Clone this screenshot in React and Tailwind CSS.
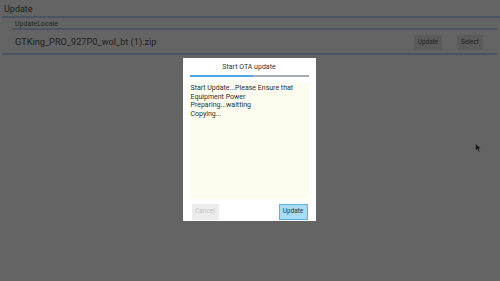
export default function App() {
  return (
    <div className="relative w-[500px] h-[281px] overflow-hidden bg-[#646464] font-['Roboto',sans-serif] text-[#1f1f1f]">
      {/* header */}
      <div className="h-[16px] pl-[4px] pt-[3px] text-[9px] leading-[12px]">Update</div>
      <div className="ml-[2px] h-[2px] bg-[#4c5362]" />
      <div className="h-[10px] pl-[15px] pt-[2px] text-[7px] leading-[8px] text-[#262626]">UpdateLocale</div>
      <div className="ml-[12px] mr-[3px] h-[2px] bg-[#4c5362]" />

      {/* file row */}
      <div className="flex h-[23px] items-center pl-[15px] pr-[17px]">
        <span className="flex-1 text-[9.2px] leading-[12px]">GTKing_PRO_927P0_wol_bt (1).zip</span>
        <div className="flex items-center gap-[15px] pt-[2px]">
          <div className="flex h-[15px] w-[28px] items-center justify-center bg-[#5b5b5b] text-[6.5px] text-[#222]">Update</div>
          <div className="flex h-[15px] w-[26px] items-center justify-center bg-[#5b5b5b] text-[6.5px] text-[#222]">Select</div>
        </div>
      </div>
      <div className="ml-[2px] mr-[3px] h-[2px] bg-[#4c5362]" />

      {/* OTA dialog */}
      <div className="flex justify-center pt-[3px] pr-[2px]">
        <div className="flex h-[163px] w-[133px] flex-col bg-white px-[7px]">
          <div className="pt-[5px] text-center text-[7px] leading-[9px] text-[#333]">Start OTA update</div>
          <div className="mt-[3px] flex h-[2px]">
            <div className="w-[63px] bg-[#4ba9e2]" />
            <div className="flex-1 bg-[#a4acb4]" />
          </div>
          <div className="mt-[5px] flex-1 bg-[#fdfdef] px-[1px] pt-[2px] text-[7px] leading-[8.5px] text-[#2e2e2e]">
            <div>Start Update...Please Ensure that</div>
            <div>Equipment Power</div>
            <div>Preparing...waitting</div>
            <div>Copying...</div>
          </div>
          <div className="flex items-center justify-between pt-[5px] pb-[1px] pl-[2px] pr-[1px]">
            <div className="flex h-[16px] w-[27px] items-center justify-center bg-[#ececec] text-[6.5px] text-[#c4c4c4]">Cancel</div>
            <div className="flex h-[16px] w-[29px] items-center justify-center border border-[#5ab2de] bg-[#a9dcf3] text-[6.5px] text-[#1d3a4a]">Update</div>
          </div>
        </div>
      </div>

      {/* mouse cursor */}
      <svg className="absolute left-[475px] top-[143px]" width="7" height="10" viewBox="0 0 7 10">
        <path d="M0.5 0.5 L0.5 8 L2.5 6.2 L4 9.2 L5.2 8.6 L3.8 5.7 L6.3 5.7 Z" fill="#111" stroke="#777" strokeWidth="0.6" />
      </svg>
    </div>
  )
}
